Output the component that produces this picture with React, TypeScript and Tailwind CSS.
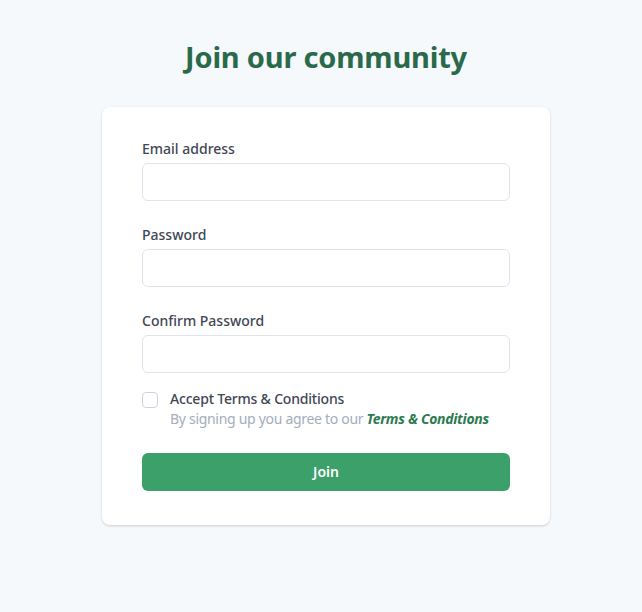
import React, { useState } from 'react';

const font = { fontFamily: '"Noto Sans", "Open Sans", sans-serif' };

const Field: React.FC<{ label: string; type: string }> = ({ label, type }) => (
    <div className="flex flex-col gap-1">
        <label className="text-sm leading-5 font-medium text-[#3f4654]">{label}</label>
        <input
            type={type}
            className="h-[38px] w-full rounded-md border border-[#dfe3ec] bg-white px-3 text-sm outline-none"
        />
    </div>
);

const App: React.FC = () => {
    const [accepted, setAccepted] = useState(false);

    return (
        <div className="min-h-screen bg-[#f5f9fc] flex flex-col items-center pt-[39px] pl-[10px]" style={font}>
            <h1 className="text-[29px] leading-9 font-bold text-[#2a6a4b] tracking-[-0.2px]">Join our community</h1>

            <div className="mt-8 w-[448px] bg-white rounded-lg shadow-[0_1px_3px_rgba(0,0,0,0.12),0_1px_2px_rgba(0,0,0,0.06)] px-10 pt-8 pb-[34px]">
                <div className="flex flex-col gap-6">
                    <Field label="Email address" type="email" />
                    <Field label="Password" type="password" />
                    <Field label="Confirm Password" type="password" />
                </div>

                <div className="mt-4 flex gap-3">
                    <button
                        onClick={() => setAccepted(!accepted)}
                        className="mt-[3px] size-4 shrink-0 rounded border border-[#cdd3dd] bg-white"
                    ></button>
                    <div className="flex flex-col">
                        <span className="text-sm leading-5 font-medium text-[#3f4654] tracking-[-0.2px]">Accept Terms & Conditions</span>
                        <span className="text-sm leading-5 text-[#a3adbd] tracking-[-0.3px]">
                            By signing up you agree to our{' '}
                            <a className="italic font-bold text-[#2c7a50]">Terms & Conditions</a>
                        </span>
                    </div>
                </div>

                <button className="mt-6 h-[38px] w-full rounded-md bg-[#3ca06b] text-white text-sm font-semibold">
                    Join
                </button>
            </div>
        </div>
    );
};

export default App;
